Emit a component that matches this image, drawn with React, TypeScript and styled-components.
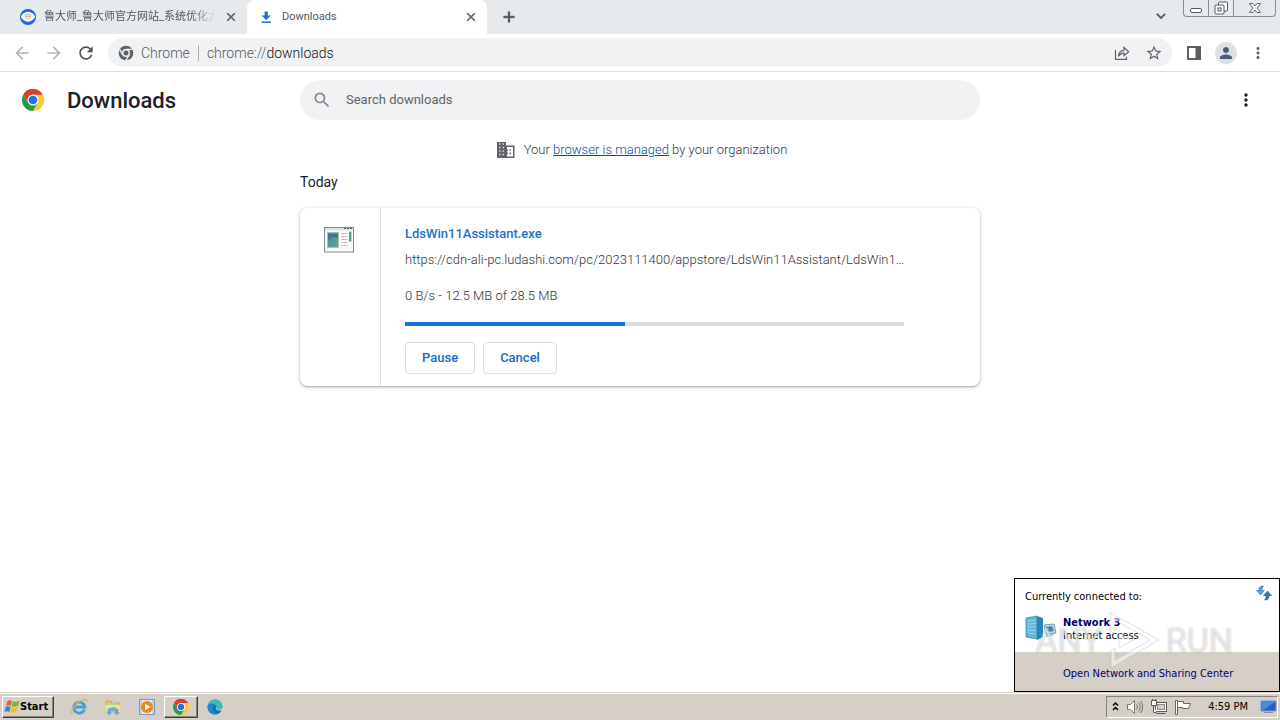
import React from "react";
import styled, { createGlobalStyle } from "styled-components";
import {
  MdAdd,
  MdArrowBack,
  MdArrowForward,
  MdClose,
  MdKeyboardArrowDown,
  MdMoreVert,
  MdPerson,
  MdRefresh,
  MdSearch,
  MdStarBorder,
} from "react-icons/md";

const GlobalStyle = createGlobalStyle`
  *, *::before, *::after { box-sizing: border-box; }
  body {
    margin: 0;
    background: #fff;
    color: #202124;
    font-family: Roboto, "Noto Sans CJK SC", sans-serif;
    font-size: 13px;
  }
  button, input { font: inherit; color: inherit; }
  button { padding: 0; border: 0; background: none; }
  svg { display: block; flex: none; }
`;

const systemFont = `"DejaVu Sans Condensed", "DejaVu Sans", sans-serif`;

const Desktop = styled.div`
  display: flex;
  flex-direction: column;
  min-height: 100vh;
`;

/* Browser frame */

const TabStrip = styled.div`
  display: flex;
  align-items: stretch;
  height: 34px;
  background: #e7eaed;
`;

const Tab = styled.div<{ $active?: boolean; $width: number }>`
  display: flex;
  align-items: center;
  flex: 0 1 ${(p) => p.$width}px;
  min-width: 0;
  padding: 0 9px 0 ${(p) => (p.$active ? 11 : 20)}px;
  gap: 8px;
  border-radius: 8px 8px 0 0;
  background: ${(p) => (p.$active ? "#fff" : "transparent")};
  color: #54575b;
  font-size: 11px;
  font-weight: 400;
`;

const TabTitle = styled.span<{ $fade?: boolean }>`
  flex: 1;
  min-width: 0;
  overflow: hidden;
  white-space: nowrap;
  line-height: 16px;
  mask-image: ${(p) =>
    p.$fade ? "linear-gradient(to right, #000 86%, transparent)" : "none"};
`;

const GlyphButton = styled.button<{ $size?: number; $color?: string; $bold?: boolean }>`
  display: flex;
  flex: none;
  align-items: center;
  justify-content: center;
  width: ${(p) => p.$size ?? 32}px;
  height: ${(p) => p.$size ?? 32}px;
  color: ${(p) => p.$color ?? "#5f6368"};
  ${(p) => (p.$bold ? `path:not([fill="none"]) { stroke-width: 1; }` : "")}
`;

const NewTab = styled.div`
  padding-left: 5px;
`;

const StripEnd = styled.div`
  display: flex;
  margin-left: auto;
  gap: 6px;
  padding-right: 4px;
`;

const WindowControls = styled.div`
  display: flex;
  height: 17px;
  border: 1px solid #8a8d90;
  border-top: 0;
  border-radius: 0 0 4px 4px;
`;

const WindowButton = styled.button<{ $width: number }>`
  display: flex;
  align-items: center;
  justify-content: center;
  width: ${(p) => p.$width}px;
  & + & {
    border-left: 1px solid #8a8d90;
  }
`;

const Toolbar = styled.div`
  display: flex;
  align-items: center;
  height: 38px;
  padding: 0 6px;
  border-bottom: 1px solid #dadce0;
`;

const Omnibox = styled.div`
  display: flex;
  align-items: center;
  flex: 1;
  height: 29px;
  margin: 0 6px;
  padding: 0 2px 0 10px;
  border-radius: 15px;
  background: #f0f2f4;
  color: #55585c;
  font-size: 14px;
  font-weight: 300;
`;

const SiteChip = styled.span`
  display: flex;
  align-items: center;
  gap: 7px;
  margin-right: 8px;
  padding-right: 8px;
  border-right: 1px solid #a9acb0;
  line-height: 16px;
`;

const AddressInput = styled.input`
  flex: 1;
  min-width: 0;
  padding: 0;
  border: 0;
  outline: 0;
  background: none;
  color: #101114;
`;

const Avatar = styled.span`
  display: flex;
  align-items: center;
  justify-content: center;
  width: 22px;
  height: 22px;
  border-radius: 50%;
  background: #dcdfe5;
  color: #4d5b7c;
`;

/* Downloads page */

const Page = styled.main`
  position: relative;
  flex: 1;
`;

const PageHeader = styled.header`
  display: grid;
  grid-template-columns: minmax(180px, 1fr) minmax(0, 680px) minmax(0, 1fr);
  align-items: center;
  height: 56px;
`;

const Brand = styled.div`
  display: flex;
  align-items: center;
  gap: 23px;
  padding-left: 22px;
`;

const Title = styled.h1`
  margin: 0;
  padding-top: 2px;
  font-size: 22px;
  font-weight: 500;
  line-height: 28px;
`;

const SearchField = styled.label`
  display: flex;
  align-items: center;
  gap: 14px;
  height: 40px;
  padding: 0 12px;
  border-radius: 20px;
  background: #f0f2f4;
  color: #80868b;
`;

const SearchInput = styled.input`
  flex: 1;
  min-width: 0;
  padding: 0 0 2px;
  border: 0;
  outline: 0;
  background: none;
  &::placeholder {
    color: #5f6368;
    opacity: 1;
  }
`;

const HeaderEnd = styled.div`
  display: flex;
  justify-content: flex-end;
  padding-right: 18px;
`;

const Content = styled.div`
  max-width: 680px;
  margin: 0 auto;
`;

const ManagedNote = styled.p`
  display: flex;
  align-items: center;
  justify-content: center;
  gap: 9px;
  height: 44px;
  margin: 0;
  padding-left: 4px;
  color: #303337;
  font-weight: 300;
  line-height: 16px;
`;

const Link = styled.a`
  color: #0a4f9e;
`;

const DayHeading = styled.h2`
  margin: 0 0 16px;
  font-size: 14px;
  font-weight: 400;
  line-height: 20px;
`;

const Card = styled.article`
  display: flex;
  border-radius: 8px;
  background: #fff;
  box-shadow: 0 1px 2px rgba(60, 64, 67, 0.35), 0 1px 5px rgba(60, 64, 67, 0.2);
`;

const FileThumb = styled.div`
  display: flex;
  justify-content: center;
  width: 81px;
  padding: 19px 2px 0 0;
  border-right: 1px solid #dadce0;
`;

const Details = styled.div`
  display: flex;
  flex: 1;
  flex-direction: column;
  min-width: 0;
  padding: 16px 76px 12px 24px;
`;

const FileName = styled.a`
  color: #1a6fd0;
  font-weight: 500;
  line-height: 20px;
  text-decoration: none;
`;

const FileLine = styled.span<{ $gap: number }>`
  margin-top: ${(p) => p.$gap}px;
  color: #303337;
  font-weight: 300;
  line-height: 20px;
  white-space: nowrap;
`;

const Track = styled.div`
  height: 4px;
  margin: 16px 0;
  background: #dcdcdc;
`;

const Fill = styled.div`
  height: 100%;
  background: #1a6fe0;
`;

const Actions = styled.div`
  display: flex;
  gap: 8px;
`;

const ActionButton = styled.button`
  height: 32px;
  padding: 0 16px 2px;
  border: 1px solid #dadce0;
  border-radius: 4px;
  background: #fff;
  color: #1a67c4;
  font-weight: 500;
`;

/* Network flyout */

const Flyout = styled.aside`
  position: absolute;
  right: 0;
  bottom: 0;
  width: 266px;
  border: 1px solid #000;
  background: #fff;
  color: #000;
  font-family: ${systemFont};
  font-size: 11px;
  line-height: 13px;
`;

const FlyoutBody = styled.div`
  height: 73px;
  padding: 6px 7px 0 10px;
`;

const FlyoutTop = styled.div`
  display: flex;
  justify-content: space-between;
  height: 22px;
`;

const FlyoutTitle = styled.span`
  padding-top: 5px;
`;

const Network = styled.div`
  display: flex;
  gap: 6px;
  margin-top: 8px;
`;

const NetworkText = styled.div`
  display: flex;
  flex-direction: column;
  padding-top: 1px;
`;

const NetworkName = styled.strong`
  color: #00006b;
`;

const FlyoutFooter = styled.div`
  display: flex;
  align-items: center;
  height: 39px;
  padding: 3px 0 0 48px;
  background: #d5cfc7;
`;

const FlyoutLink = styled.a`
  color: #00006b;
  text-decoration: none;
`;

const Watermark = styled.div`
  position: absolute;
  right: 46px;
  bottom: 21px;
  display: flex;
  align-items: center;
  gap: 4px;
  color: rgba(255, 255, 255, 0.5);
  font-family: Roboto, sans-serif;
  font-size: 34px;
  font-weight: 400;
  line-height: 60px;
  text-shadow: 0 0 2px rgba(120, 120, 120, 0.45);
  pointer-events: none;
`;

/* Taskbar */

const Taskbar = styled.footer`
  display: flex;
  align-items: center;
  height: 28px;
  padding: 0 2px;
  border-top: 1px solid #d5cfc7;
  box-shadow: inset 0 1px #fff;
  background: #d5cfc7;
  color: #000;
  font-family: ${systemFont};
  font-size: 11px;
`;

const raised = `
  border: 1px solid;
  border-color: #fff #404040 #404040 #fff;
  box-shadow: inset -1px -1px #86827c;
`;

const StartButton = styled.button`
  display: flex;
  align-items: center;
  width: 52px;
  height: 22px;
  padding-left: 1px;
  margin-right: 8px;
  ${raised}
  font-weight: 700;
`;

const TaskButton = styled.button<{ $open?: boolean }>`
  display: flex;
  align-items: center;
  justify-content: center;
  width: 34px;
  height: 22px;
  ${(p) => (p.$open ? raised : "")}
`;

const Tray = styled.div`
  display: flex;
  align-items: center;
  gap: 6px;
  height: 22px;
  margin-left: auto;
  padding: 0 0 0 4px;
  border: 1px solid;
  border-color: #86827c #fff #fff #86827c;
`;

const Clock = styled.time`
  margin: 0 6px 0 10px;
`;

/* Drawings */

const ChromeLogo = ({ size }: { size: number }) => (
  <svg width={size} height={size} viewBox="0 0 48 48" aria-hidden="true">
    <path d="M24 24 3.2 12A24 24 0 0 1 44.8 12Z" fill="#df3b30" />
    <path d="M24 12H44.8A24 24 0 0 1 24 48L34.4 30Z" fill="#fcc934" />
    <path d="M3.2 12A24 24 0 0 1 44.8 12H24L13.6 30Z" fill="#df3b30" />
    <path d="M3.2 12 13.6 30 34.4 30 24 48A24 24 0 0 1 3.2 12Z" fill="#2a9a48" />
    <circle cx="24" cy="24" r="12" fill="#fff" />
    <circle cx="24" cy="24" r="9.5" fill="#1a73e8" />
  </svg>
);

const ChromeMono = () => (
  <svg width="16" height="16" viewBox="0 0 48 48" aria-hidden="true">
    <circle cx="24" cy="24" r="22" fill="#5f6368" />
    <path
      d="M24 13H44M14.5 29.5 4.5 12.5M33.5 29.5 23.5 47"
      stroke="#f0f2f4"
      strokeWidth="4"
    />
    <circle cx="24" cy="24" r="12" fill="#f0f2f4" />
    <circle cx="24" cy="24" r="7.5" fill="#5f6368" />
  </svg>
);

const LudashiIcon = () => (
  <svg width="16" height="16" viewBox="0 0 16 16" aria-hidden="true">
    <circle cx="8" cy="8" r="8" fill="#2563e6" />
    <path d="M.8 8Q3 3.200 8 2.800 13 3.200 15.200 8 13 12.200 8 12.800 3 12.200 .8 8Z" fill="#fff" />
    <ellipse cx="8" cy="7.600" rx="3.800" ry="2.800" fill="#f3dccb" />
    <path d="M4.500 6.200Q8 3.500 11.500 6.200" stroke="#b4bdd6" fill="none" />
    <path d="M6 7.500h1M9 7.500h1" stroke="#8a7a70" strokeWidth=".8" />
  </svg>
);

const DownloadIcon = () => (
  <svg width="16" height="16" viewBox="0 0 16 16" aria-hidden="true">
    <path d="M6.600 2.500h3.200v4h3L8.200 11 3.600 6.500h3zM3.500 12.500h9.400v1.400H3.500z" fill="#1a6fd0" />
  </svg>
);

const ShareIcon = () => (
  <svg width="16" height="16" viewBox="0 0 16 16" fill="none" stroke="#5f6368" strokeWidth="1.200" aria-hidden="true">
    <path d="M1.500 5v9.300h11v-2.500" />
    <path d="M4.300 11.300C4.700 7.700 6.800 5.500 10 5.300V2.400L14.700 6.700 10 10.800V8.200C7.500 8.200 5.700 9.200 4.300 11.300Z" />
  </svg>
);

const SidePanelIcon = () => (
  <svg width="16" height="16" viewBox="0 0 16 16" aria-hidden="true">
    <path d="M1 1h14v14H1zM3 3v10h6.500V3z" fill="#5f5d60" fillRule="evenodd" />
  </svg>
);

const OrganizationIcon = () => (
  <svg width="18" height="16" viewBox="0 0 18 16" aria-hidden="true">
    <path d="M0 0h9v3.500h8.500V16H0zM10 5v9.500h6V5z" fill="#5f6368" fillRule="evenodd" />
    <path
      d="M2 2h1.500M5.500 2H7M2 5.500h1.500M5.500 5.500H7M2 9h1.500M5.500 9H7M2 12.500h1.500M5.500 12.500H7"
      stroke="#d8dadc"
      strokeWidth="1.300"
    />
    <path d="M12.500 8H14M12.500 11.500H14M9 8h2M9 11.500h2" stroke="#5f6368" strokeWidth="1.500" />
  </svg>
);

const ProgramIcon = () => (
  <svg width="30" height="26" viewBox="0 0 30 26" aria-hidden="true">
    <defs>
      <linearGradient id="shot" x1="0" y1="0" x2="1" y2="1">
        <stop offset="0" stopColor="#4a82b0" />
        <stop offset="1" stopColor="#58b07c" />
      </linearGradient>
    </defs>
    <rect x=".5" y=".5" width="29" height="24.500" fill="#fafafa" stroke="#85898c" />
    <path d="M1 1h28v2.500H1z" fill="#dfe5e8" />
    <path d="M20 1.500h2M23 1.500h2M26 1.500h2" stroke="#555" />
    <rect x="3.500" y="5.500" width="11" height="15" fill="url(#shot)" stroke="#a9bfb2" />
    <path d="M4 13q5-5 10-2V7H4z" fill="#3c7797" />
    <path d="M17 6.500h6.500M17 9.500h6.500M17 12.500h6.500M17 15.500h6.500M17 18.500h6.500" stroke="#dcb9bd" />
    <rect x="25.500" y="5" width="1.500" height="9" fill="#56ad7c" stroke="#4a6f94" strokeWidth=".6" />
  </svg>
);

const RefreshArrows = () => (
  <svg width="16" height="16" viewBox="0 0 16 16" aria-hidden="true">
    <path d="M6.500 1C3.800 1 2.800 2.600 3 5.500H.5L4.500 10 8.500 5.500H6C5.900 3.500 6.300 2.200 7.300 1Z" fill="#5aa3cf" stroke="#28699f" strokeWidth=".6" />
    <path d="M9.500 15C12.200 15 13.200 13.400 13 10.500H15.500L11.500 6 7.500 10.500H10C10.100 12.500 9.700 13.800 8.700 15Z" fill="#3c78b4" stroke="#28508c" strokeWidth=".6" />
  </svg>
);

const ServerIcon = () => (
  <svg width="32" height="26" viewBox="0 0 32 26" aria-hidden="true">
    <path d="M1 3 12 1v23L1 22Z" fill="#5fb8dd" stroke="#2f84a8" strokeWidth=".7" />
    <path d="m12 1 6 2v19l-6 3z" fill="#2787ae" />
    <path d="M2.500 6 11 5M2.500 9 11 8.500M2.500 12H11M2.500 15l8.500.5M2.500 18l8.500 1" stroke="#94d6ef" />
    <path d="m19 10 10-1 2 9-10 1z" fill="#bfdce8" stroke="#7a9bae" />
    <path d="m21 12 6-1 2 5-6 1z" fill="#3f86ab" />
    <path d="m21 20 6-1 3 1-9 2z" fill="#a3bfcd" />
  </svg>
);

const WatermarkPlay = () => (
  <svg width="56" height="60" viewBox="0 0 56 60" fill="none" stroke="#9a9a9a" strokeOpacity=".4" strokeWidth=".8" aria-hidden="true">
    <path
      d="M4 21V2.500L53 30 5 58V41l4-3v12L44 30 9 10v14ZM13 23l14 7-14 8Z"
      fill="#fff"
      fillOpacity=".5"
      fillRule="evenodd"
    />
  </svg>
);

const WindowsFlag = () => (
  <svg width="16" height="16" viewBox="0 0 16 16" aria-hidden="true">
    <path d="M3.500 2Q6 .5 8 2L6.800 7Q4.500 5.500 2 7Z" fill="#e8622a" />
    <path d="M8.800 2.300Q11.500 3.500 15.500 2L14 7Q10.500 8.500 7.600 7.300Z" fill="#77b83c" />
    <path d="M1.800 8Q4 6.500 6.500 8L5.300 13Q3 11.500.3 13Z" fill="#3b7fd0" />
    <path d="M7.300 8.300Q10 9.500 13.700 8L12.300 13Q9 14.500 6 13.300Z" fill="#f4bc2c" />
  </svg>
);

const ExplorerE = () => (
  <svg width="18" height="18" viewBox="0 0 18 18" fill="none" aria-hidden="true">
    <path d="M14.500 11.500A5.500 5.500 0 1 1 14.800 9H5" stroke="#3aa2dc" strokeWidth="2.800" />
    <path d="M2.500 16C-.5 14 5 6 10 3.200 14 .8 17.500.8 16.500 4" stroke="#e6b33b" strokeWidth="1.400" />
  </svg>
);

const FolderIcon = () => (
  <svg width="18" height="18" viewBox="0 0 18 18" aria-hidden="true">
    <path d="M2 3h5l1 2h8v9H2Z" fill="#e8c866" stroke="#bd9a45" strokeWidth=".7" />
    <path d="M4 5h9v4H4z" fill="#a8d89a" />
    <path d="M1.500 7h15v7h-15z" fill="#f6e09a" />
    <path d="M4 16v-4.500Q9 8 14 11.500V16h-2.500v-3h-5v3Z" fill="#6cb5df" stroke="#3987b8" strokeWidth=".6" />
  </svg>
);

const MediaIcon = () => (
  <svg width="16" height="16" viewBox="0 0 16 16" aria-hidden="true">
    <rect x=".5" y=".5" width="15" height="15" fill="#b8d6ea" stroke="#6d9fc4" />
    <rect x="3" y="1" width="10" height="14" fill="#dcebf4" />
    <circle cx="8" cy="8" r="6" fill="#f2861c" />
    <path d="m6 4.800 5.500 3.200L6 11.200Z" fill="#fff" />
  </svg>
);

const EdgeIcon = () => (
  <svg width="16" height="16" viewBox="0 0 16 16" aria-hidden="true">
    <circle cx="8" cy="8" r="7.500" fill="#1670bd" />
    <path d="M.6 7A7.500 7.500 0 0 1 15.500 7.500C15.400 10 13 10.800 10.500 10.300 9 10 10.200 9 9.800 7.500 8.800 4.500 2.500 4 .6 7Z" fill="#38c1ae" />
    <path d="M.6 7C2.500 4 6.500 4.200 8 5.500 4.500 6.500 5 13 10.500 15A7.500 7.500 0 0 1 .6 7Z" fill="#1b8ad6" />
    <path d="M9.800 7.500C8 9 8.200 12 14.600 11.400L16 9.500V8Q15 11 10.500 10.300 9 10 9.800 7.500Z" fill="#d5cfc7" />
  </svg>
);

const TrayChevrons = () => (
  <svg width="9" height="12" viewBox="0 0 9 12" fill="none" stroke="#000" strokeWidth="1.500" aria-hidden="true">
    <path d="m2 4.500 2.500-2.500L7 4.500M2 9l2.500-2.500L7 9" />
  </svg>
);

const SpeakerIcon = () => (
  <svg width="18" height="16" viewBox="0 0 18 16" fill="none" stroke="#77746f" aria-hidden="true">
    <path d="M1.500 5.500h3l4-4v13l-4-4h-3z" fill="#fff" />
    <path d="M10.500 5.500q2 2.500 0 5M12.500 3.500q3.500 4.500 0 9M14.500 2q4.500 6 0 12" />
  </svg>
);

const NetworkTrayIcon = () => (
  <svg width="18" height="16" viewBox="0 0 18 16" stroke="#5d5a56" fill="#fff" aria-hidden="true">
    <rect x="5.500" y="3.500" width="11" height="9" />
    <rect x="7.500" y="5.500" width="7" height="5" fill="#d2cfca" stroke="#8c8984" />
    <path d="M6.500 14.500h9" />
    <path d="M1.500 1.500h5v5h-5zM3.500 6.500v7h3" />
    <path d="M2.500 0v2M5.500 0v2" />
  </svg>
);

const FlagIcon = () => (
  <svg width="18" height="16" viewBox="0 0 18 16" stroke="#6b6864" fill="#fff" aria-hidden="true">
    <path d="M3.500 2.500h6v2h7l-2 5h-6v-1h-5z" />
    <path d="M1.500 1.500h2v14h-2z" />
  </svg>
);

const DesktopIcon = () => (
  <svg width="17" height="15" viewBox="0 0 17 15" aria-hidden="true">
    <path d="M1 2h15v10H1z" fill="#2560b8" stroke="#7898bd" />
    <path d="M1.500 2.500h14L3 11.500H1.500Z" fill="#4a8bdc" />
    <path d="M4 13.500h9" stroke="#7d8ea0" />
  </svg>
);

export default function App() {
  return (
    <Desktop>
      <GlobalStyle />
      <TabStrip>
        <Tab $width={247}>
          <LudashiIcon />
          <TabTitle $fade>鲁大师_鲁大师官方网站_系统优化大</TabTitle>
          <GlyphButton $size={14} $bold aria-label="Close tab">
            <MdClose size={14} />
          </GlyphButton>
        </Tab>
        <Tab $active $width={240}>
          <DownloadIcon />
          <TabTitle>Downloads</TabTitle>
          <GlyphButton $size={14} $bold aria-label="Close tab">
            <MdClose size={14} />
          </GlyphButton>
        </Tab>
        <NewTab>
          <GlyphButton $size={34} $bold $color="#4f5256" aria-label="New tab">
            <MdAdd size={18} />
          </GlyphButton>
        </NewTab>
        <StripEnd>
          <GlyphButton $bold aria-label="Search tabs">
            <MdKeyboardArrowDown size={18} />
          </GlyphButton>
          <WindowControls>
            <WindowButton $width={24} aria-label="Minimize">
              <svg width="14" height="14" viewBox="0 0 14 14" fill="#fff" stroke="#55595d">
                <rect x="1.500" y="7.500" width="11" height="4" rx="1.500" />
              </svg>
            </WindowButton>
            <WindowButton $width={25} aria-label="Restore">
              <svg width="14" height="14" viewBox="0 0 14 14" fill="#fff" stroke="#55595d">
                <rect x="4.500" y="1" width="9" height="9" rx="1" />
                <rect x="1" y="4" width="9" height="9" rx="1" />
                <rect x="4" y="7" width="3" height="3" />
              </svg>
            </WindowButton>
            <WindowButton $width={42} aria-label="Close">
              <svg width="14" height="14" viewBox="0 0 14 14" fill="#fff" stroke="#55595d" strokeWidth=".9">
                <path d="M1.500 2.500h3.500l2 2.500 2-2.500h3.500L9.200 7.200l3.300 4.300H9L7 9l-2 2.500H1.500l3.300-4.300Z" />
              </svg>
            </WindowButton>
          </WindowControls>
        </StripEnd>
      </TabStrip>

      <Toolbar>
        <GlyphButton $color="#b4b6b9" aria-label="Back">
          <MdArrowBack size={20} />
        </GlyphButton>
        <GlyphButton $color="#b4b6b9" aria-label="Forward">
          <MdArrowForward size={20} />
        </GlyphButton>
        <GlyphButton $color="#4f5256" aria-label="Reload">
          <MdRefresh size={20} />
        </GlyphButton>
        <Omnibox>
          <SiteChip>
            <ChromeMono />
            Chrome
          </SiteChip>
          <span>chrome://</span>
          <AddressInput aria-label="Address" defaultValue="downloads" />
          <GlyphButton aria-label="Share this page">
            <ShareIcon />
          </GlyphButton>
          <GlyphButton aria-label="Bookmark this tab">
            <MdStarBorder size={18} />
          </GlyphButton>
        </Omnibox>
        <GlyphButton aria-label="Side panel">
          <SidePanelIcon />
        </GlyphButton>
        <GlyphButton aria-label="Profile">
          <Avatar>
            <MdPerson size={18} />
          </Avatar>
        </GlyphButton>
        <GlyphButton aria-label="Browser menu">
          <MdMoreVert size={18} />
        </GlyphButton>
      </Toolbar>

      <Page>
        <PageHeader>
          <Brand>
            <ChromeLogo size={22} />
            <Title>Downloads</Title>
          </Brand>
          <SearchField>
            <MdSearch size={20} />
            <SearchInput type="search" aria-label="Search downloads" placeholder="Search downloads" />
          </SearchField>
          <HeaderEnd>
            <GlyphButton $color="#202124" aria-label="More actions">
              <MdMoreVert size={20} />
            </GlyphButton>
          </HeaderEnd>
        </PageHeader>

        <Content>
          <ManagedNote>
            <OrganizationIcon />
            <span>
              Your <Link href="#management">browser is managed</Link> by your organization
            </span>
          </ManagedNote>
          <DayHeading>Today</DayHeading>
          <Card>
            <FileThumb>
              <ProgramIcon />
            </FileThumb>
            <Details>
              <FileName href="#file">LdsWin11Assistant.exe</FileName>
              <FileLine $gap={6}>
                https://cdn-ali-pc.ludashi.com/pc/2023111400/appstore/LdsWin11Assistant/LdsWin1…
              </FileLine>
              <FileLine $gap={16}>0 B/s - 12.5 MB of 28.5 MB</FileLine>
              <Track role="progressbar" aria-label="Download progress" aria-valuenow={44}>
                <Fill style={{ width: "44%" }} />
              </Track>
              <Actions>
                <ActionButton>Pause</ActionButton>
                <ActionButton>Cancel</ActionButton>
              </Actions>
            </Details>
          </Card>
        </Content>

        <Flyout>
          <FlyoutBody>
            <FlyoutTop>
              <FlyoutTitle>Currently connected to:</FlyoutTitle>
              <RefreshArrows />
            </FlyoutTop>
            <Network>
              <ServerIcon />
              <NetworkText>
                <NetworkName>Network 3</NetworkName>
                <span>Internet access</span>
              </NetworkText>
            </Network>
          </FlyoutBody>
          <FlyoutFooter>
            <FlyoutLink href="#network">Open Network and Sharing Center</FlyoutLink>
          </FlyoutFooter>
          <Watermark>
            <span>ANY</span>
            <WatermarkPlay />
            <span>RUN</span>
          </Watermark>
        </Flyout>
      </Page>

      <Taskbar>
        <StartButton>
          <WindowsFlag />
          Start
        </StartButton>
        <TaskButton aria-label="Internet Explorer">
          <ExplorerE />
        </TaskButton>
        <TaskButton aria-label="File Explorer">
          <FolderIcon />
        </TaskButton>
        <TaskButton aria-label="Media Player">
          <MediaIcon />
        </TaskButton>
        <TaskButton $open aria-label="Chrome">
          <ChromeLogo size={16} />
        </TaskButton>
        <TaskButton aria-label="Edge">
          <EdgeIcon />
        </TaskButton>
        <Tray>
          <TrayChevrons />
          <SpeakerIcon />
          <NetworkTrayIcon />
          <FlagIcon />
          <Clock>4:59 PM</Clock>
          <DesktopIcon />
        </Tray>
      </Taskbar>
    </Desktop>
  );
}
